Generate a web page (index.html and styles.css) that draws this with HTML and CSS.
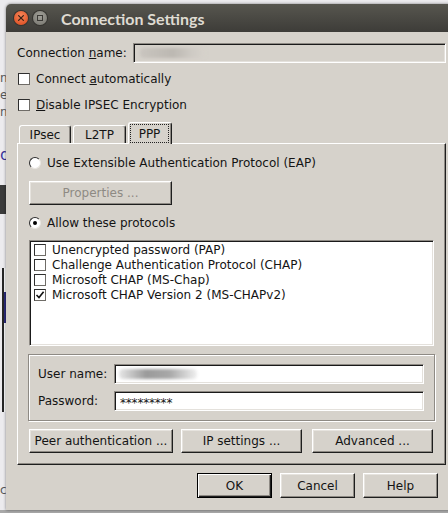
FILE: index.html
```html
<!DOCTYPE html>
<html lang="en">
<head>
    <meta charset="UTF-8">
    <title>Connection Settings</title>
    <link rel="stylesheet" href="styles.css">
</head>
<body>
    <!-- window behind the dialog, only a sliver shows -->
    <div class="bg-window">
        <div class="bg-strip">
            <div class="bg-line bg-l1">ne</div>
            <div class="bg-line">e</div>
            <div class="bg-line">na</div>
            <div class="bg-line bg-link">d</div>
            <div class="bg-block"></div>
            <div class="bg-frame"><div class="bg-sel"></div></div>
            <div class="bg-line bg-last">c</div>
        </div>
    </div>

    <div class="dialog">
        <div class="titlebar">
            <span class="wbtn close">
                <svg width="14" height="14" viewBox="0 0 14 14"><path d="M4.6 4.6 L9.4 9.4 M9.4 4.6 L4.6 9.4" stroke="#3b2418" stroke-width="1.3" stroke-linecap="round"/></svg>
            </span>
            <span class="wbtn minimize"><span class="sq"></span></span>
            <span class="title">Connection Settings</span>
        </div>

        <div class="content">
            <div class="name-row">
                <label class="name-label">Connection <u>n</u>ame:</label>
                <div class="field disabled"><span class="blur blur-name"></span></div>
            </div>

            <div class="checks">
                <div class="check-row"><span class="check"></span><span>Connect <u>a</u>utomatically</span></div>
                <div class="check-row"><span class="check"></span><span><u>D</u>isable IPSEC Encryption</span></div>
            </div>

            <div class="tabs">
                <div class="tab tab-ipsec">IPsec</div>
                <div class="tab tab-l2tp">L2TP</div>
                <div class="tab tab-ppp active"><span class="focus">PPP</span></div>
            </div>

            <div class="panel">
                <div class="radio-row"><span class="radio"></span><span>Use Extensible Authentication Protocol (EAP)</span></div>
                <button class="btn btn-props" disabled>Properties ...</button>
                <div class="radio-row radio-row2"><span class="radio on"><span class="dot"></span></span><span>Allow these protocols</span></div>

                <div class="list">
                    <div class="item"><span class="check"></span>Unencrypted password (PAP)</div>
                    <div class="item"><span class="check"></span>Challenge Authentication Protocol (CHAP)</div>
                    <div class="item"><span class="check"></span>Microsoft CHAP (MS-Chap)</div>
                    <div class="item"><span class="check checked"><svg width="10" height="10" viewBox="0 0 10 10"><path d="M1.5 5 L4 7.6 L8.6 1.8" fill="none" stroke="#111" stroke-width="1.6"/></svg></span>Microsoft CHAP Version 2 (MS-CHAPv2)</div>
                </div>

                <div class="group">
                    <div class="group-row">
                        <label class="group-label">User name:</label>
                        <div class="field"><span class="blur blur-user"></span></div>
                    </div>
                    <div class="group-row">
                        <label class="group-label">Password:</label>
                        <div class="field"><span class="pass">*********</span></div>
                    </div>
                </div>

                <div class="btn-row">
                    <button class="btn btn-peer">Peer authentication ...</button>
                    <button class="btn btn-ip">IP settings ...</button>
                    <button class="btn btn-adv">Advanced ...</button>
                </div>
            </div>

            <div class="dialog-buttons">
                <button class="btn btn-bottom default">OK</button>
                <button class="btn btn-bottom">Cancel</button>
                <button class="btn btn-bottom">Help</button>
            </div>
        </div>
    </div>
</body>
</html>
```

FILE: styles.css
```css
* {
    box-sizing: border-box;
}

body {
    margin: 0;
    width: 448px;
    height: 513px;
    overflow: hidden;
    position: relative;
    background-color: #a9a9a9;
    font-family: "DejaVu Sans", sans-serif;
    font-size: 12px;
    color: #141414;
}

/* background window */
.bg-window {
    position: absolute;
    left: 0;
    top: 0;
    width: 448px;
    height: 510px;
    background-color: #ecebee;
}

.bg-strip {
    width: 30px;
    display: flex;
    flex-direction: column;
}

.bg-line {
    white-space: nowrap;
    height: 17px;
    line-height: 17px;
    color: #5a5a5a;
}

.bg-l1 {
    margin-top: 70px;
}

.bg-link {
    margin-top: 25px;
    color: #3a3399;
    font-size: 16px;
}

.bg-block {
    margin-top: 22px;
    height: 29px;
    background-color: #3b3b3b;
}

.bg-frame {
    margin-top: 54px;
    margin-left: 2px;
    height: 144px;
    border-left: 2px solid #262626;
    background-color: #fafafa;
}

.bg-sel {
    margin-top: 24px;
    height: 31px;
    background-color: #2b2a7c;
}

.bg-last {
    margin-top: 70px;
}

/* dialog */
.dialog {
    position: absolute;
    left: 6px;
    top: 4px;
    width: 451px;
    height: 506px;
    background-color: #d6d2cb;
    border-radius: 5px 5px 0 0;
    box-shadow: 0 0 3px rgba(0, 0, 0, 0.5);
}

.titlebar {
    height: 28px;
    display: flex;
    align-items: center;
    padding-left: 8px;
    background: linear-gradient(#57564f, #3d3c38);
    border-radius: 5px 5px 0 0;
}

.wbtn {
    width: 14px;
    height: 14px;
    border-radius: 50%;
    display: flex;
    align-items: center;
    justify-content: center;
    box-shadow: 0 0 0 1px #34332f;
}

.close {
    background: radial-gradient(circle at 50% 35%, #f7875a, #d9461a);
}

.minimize {
    margin-left: 5px;
    background: radial-gradient(circle at 50% 35%, #a09f98, #76756e);
}

.minimize .sq {
    width: 6px;
    height: 6px;
    border: 1px solid #3a3935;
}

.title {
    margin-left: 14px;
    font-family: Lato, sans-serif;
    font-weight: bold;
    font-size: 16px;
    color: #dfdbd2;
}

.content {
    padding: 11px 11px 0 11px;
}

/* fields */
.name-row {
    display: flex;
    align-items: center;
    height: 20px;
}

.name-label {
    width: 116px;
}

.field {
    flex: 1;
    height: 20px;
    display: flex;
    align-items: center;
    padding-left: 4px;
    background-color: #fff;
    border: 1px solid;
    border-color: #8e8a84 #fff #fff #8e8a84;
    box-shadow: inset 1px 1px 0 #1a1a1a, inset -1px -1px 0 #e4e1dc;
}

.field.disabled {
    background-color: #d6d2cb;
}

.blur {
    display: block;
    height: 10px;
    border-radius: 4px;
    filter: blur(1.6px);
}

.blur-name {
    margin-left: 2px;
    width: 66px;
    background: linear-gradient(90deg, #c9c5bf, #bcb8b2 50%, #cfcbc5 80%, #d6d2cb);
}

.blur-user {
    width: 78px;
    background: linear-gradient(90deg, #e6e6e6, #9a9a9a 35%, #a8a8a8 65%, #f0f0f0);
}

.pass {
    margin-left: 1px;
    font-size: 12px;
    line-height: 12px;
    letter-spacing: -0.2px;
    padding-top: 3px;
}

/* checkboxes */
.checks {
    margin-top: 3px;
}

.check-row {
    display: flex;
    align-items: center;
    height: 26px;
}

.check {
    width: 12px;
    height: 12px;
    flex: none;
    display: flex;
    align-items: center;
    justify-content: center;
    margin-left: 1px;
    margin-right: 6px;
    background-color: #fff;
    border: 1px solid;
    border-color: #2e2e2e #6f6c67 #6f6c67 #2e2e2e;
}

/* tabs */
.tabs {
    display: flex;
    align-items: flex-end;
    height: 21px;
    margin-top: 4px;
    padding-left: 2px;
}

.tab {
    height: 18px;
    margin-right: 2px;
    display: flex;
    align-items: center;
    justify-content: center;
    padding-top: 1px;
    border: 1px solid;
    border-bottom: none;
    border-color: #fff #1e1e1e #fff #fff;
    border-radius: 3px 3px 0 0;
    box-shadow: inset -1px 0 0 #8e8a84;
}

.tab-ipsec {
    width: 52px;
}

.tab-l2tp {
    width: 53px;
}

.tab-ppp {
    width: 44px;
}

.tab.active {
    height: 22px;
    margin-bottom: -1px;
    padding: 1px 2px 1px 1px;
    position: relative;
    background-color: #d6d2cb;
}

.focus {
    flex: 1;
    align-self: stretch;
    display: flex;
    align-items: center;
    justify-content: center;
    border: 1px dotted #222;
}

/* panel */
.panel {
    height: 322px;
    padding: 9px 11px 0 11px;
    border: 1px solid;
    border-color: #fff #1e1e1e #1e1e1e #fff;
    box-shadow: inset -1px -1px 0 #8e8a84;
}

.radio-row {
    display: flex;
    align-items: center;
    height: 20px;
}

.radio-row2 {
    margin-top: 8px;
}

.radio {
    width: 12px;
    height: 12px;
    margin-right: 6px;
    border-radius: 50%;
    display: flex;
    align-items: center;
    justify-content: center;
    background-color: #fff;
    border: 1px solid;
    border-color: #2e2e2e #e9e6e1 #e9e6e1 #2e2e2e;
}

.radio .dot {
    width: 4px;
    height: 4px;
    border-radius: 50%;
    background-color: #000;
}

.btn {
    height: 24px;
    padding: 0;
    display: flex;
    align-items: center;
    justify-content: center;
    font: inherit;
    color: inherit;
    background-color: #d6d2cb;
    border: 1px solid;
    border-color: #fff #1e1e1e #1e1e1e #fff;
    border-radius: 0;
    box-shadow: inset -1px -1px 0 #8e8a84, inset 1px 1px 0 #e6e3de;
}

.btn-props {
    width: 143px;
    margin-top: 8px;
    color: #8e8a84;
}

.list {
    margin-top: 7px;
    height: 106px;
    padding: 1px 0 0 4px;
    background-color: #fff;
    border: 1px solid;
    border-color: #8e8a84 #fff #fff #8e8a84;
    box-shadow: inset 1px 1px 0 #1a1a1a, inset -1px -1px 0 #e4e1dc;
}

.item {
    display: flex;
    align-items: center;
    height: 15px;
}

.item .check {
    margin-left: 0;
}

.group {
    margin: 8px -1px 0 -1px;
    height: 67px;
    padding: 9px 10px 0 9px;
    border: 1px solid #8e8a84;
    box-shadow: inset 1px 1px 0 #fff, 1px 1px 0 #fff;
}

.group-row {
    display: flex;
    align-items: center;
    height: 20px;
    margin-bottom: 7px;
}

.group-label {
    width: 76px;
}

.btn-row {
    display: flex;
    margin-top: 8px;
}

.btn-peer {
    width: 144px;
    margin-right: 8px;
}

.btn-ip {
    width: 121px;
    margin-right: 10px;
}

.btn-adv {
    width: 121px;
}

.dialog-buttons {
    display: flex;
    justify-content: flex-end;
    gap: 8px;
    margin-top: 8px;
    padding-right: 8px;
}

.btn-bottom {
    width: 75px;
    height: 25px;
}

.btn-bottom.default {
    border: 1px solid #000;
    box-shadow: inset 1px 1px 0 #fff, inset -1px -1px 0 #1e1e1e, inset -2px -2px 0 #8e8a84;
}
```
